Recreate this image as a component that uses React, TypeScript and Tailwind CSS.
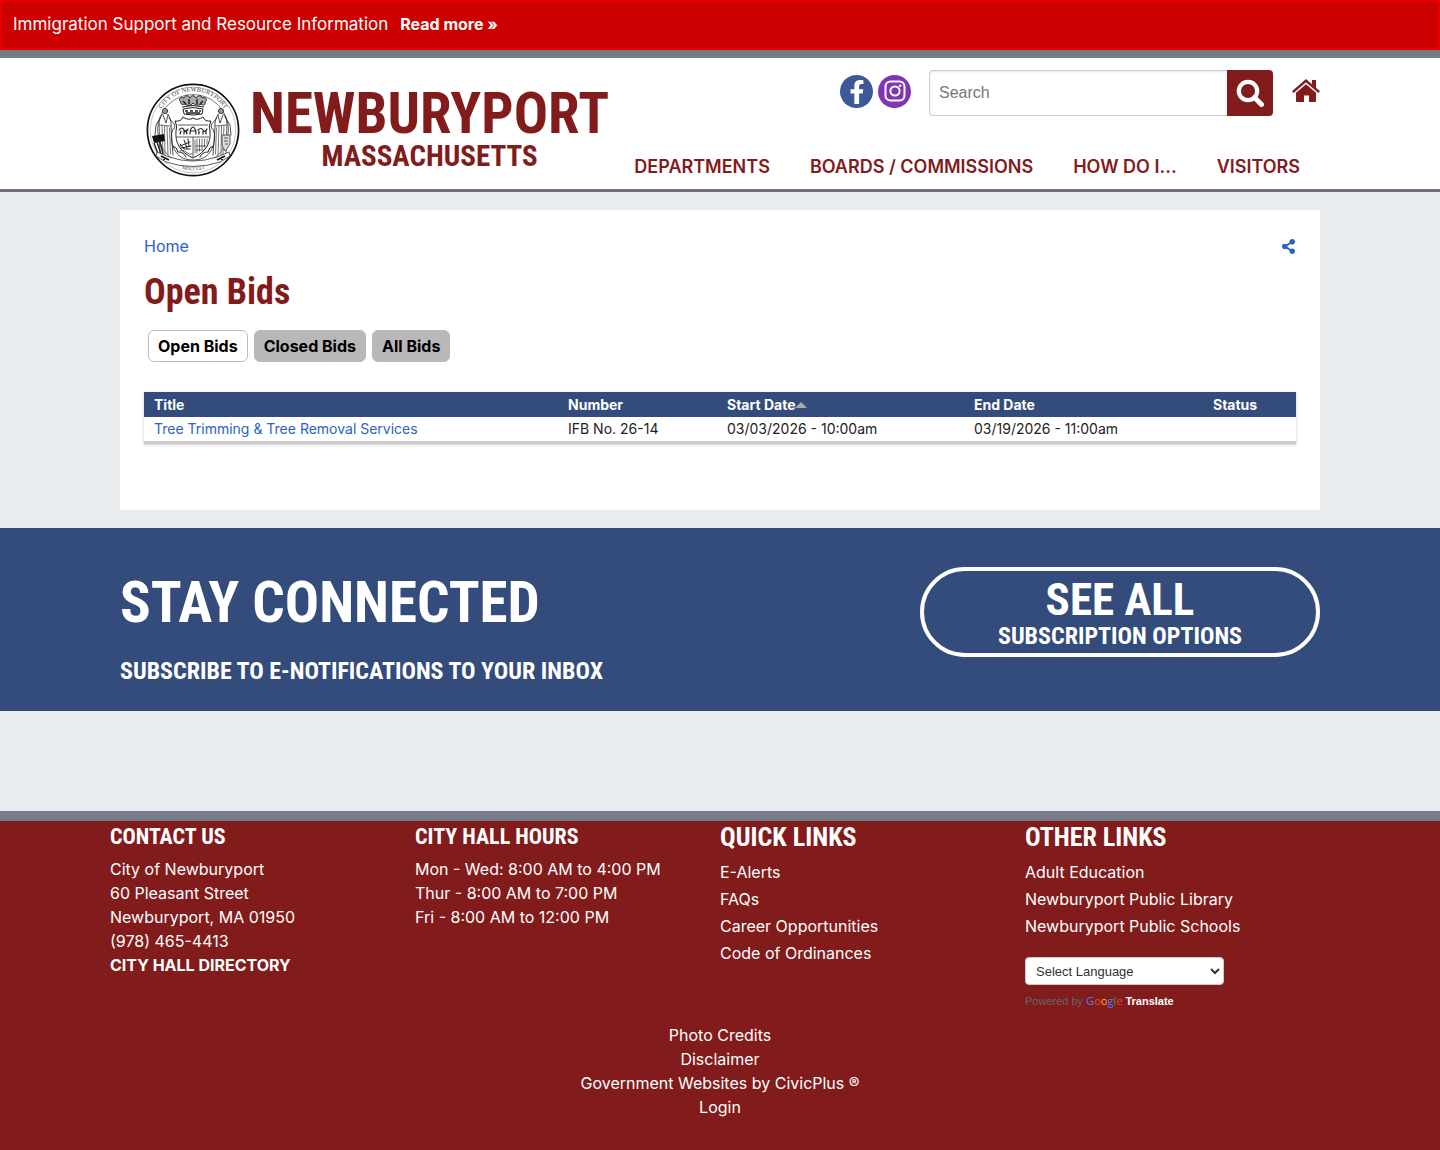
import React from "react";
import { FaFacebookF, FaShareAlt } from "react-icons/fa";

const heading = "font-['Roboto_Condensed','Liberation_Sans_Narrow','Open_Sans_Condensed','DejaVu_Sans_Condensed',sans-serif] font-bold";

function Figure() {
  return (
    <g fill="none" stroke="#222" strokeWidth="0.8" strokeLinecap="round">
      <circle cx="19" cy="28" r="2.6" fill="#999" />
      <path d="M16.5 31 C14 34 13 37 13 42 L14 72 M21.5 31 C24 34 25.5 38 25 44 L27 72 M17 32 L20 40 L22 32" />
      <path d="M16 42 L17 72 M18.5 43 L19 72 M21 43 L22 72 M23.5 45 L24.5 71 M13 42 L25 43" stroke="#555" />
      <path d="M15 34 L10 42 L9 52 M23 35 L29 42 L28 46" />
    </g>
  );
}

function Seal() {
  return (
    <svg viewBox="0 0 94 94" className="size-[94px] shrink-0" role="img" aria-label="City of Newburyport seal">
      <defs>
        <path id="seal-top" d="M14.8 62.5 A36.7 36.7 0 1 1 79.2 62.5" />
        <path id="seal-bottom" d="M24 80 A40 40 0 0 0 70 80" />
      </defs>
      <circle cx="47" cy="47" r="45.6" fill="#fff" stroke="#111" strokeWidth="1.7" />
      <circle cx="47" cy="47" r="42.8" fill="none" stroke="#888" strokeWidth="0.5" />
      <circle cx="47" cy="47" r="35.5" fill="none" stroke="#444" strokeWidth="0.7" />
      <text fontSize="6.5" fill="#444" fontFamily="Liberation Serif, serif">
        <textPath href="#seal-top" startOffset="50%" textAnchor="middle">CITY OF NEWBURYPORT</textPath>
      </text>
      <g fill="none" stroke="#222" strokeWidth="1">
        <path d="M35 19 C32 17 34 13 38 15 C39 12 43 12 44 15 C45 12 49 12 50 15 C52 12 56 12 56 15 C60 13 62 17 59 19 C60 22 57 23 55 21 C52 23 49 22 47 20 C45 23 41 23 39 21 C36 22 34 21 35 19Z" fill="#aaa" />
        <path d="M37 18 L40 21 M43 16 L43 21 M51 16 L51 21 M57 18 L54 21" strokeWidth="1.5" />
        <path d="M36 24 Q47 21 58 24 M37 26 Q47 23 57 26 L56 31 Q47 33 38 31Z" />
        <path d="M39 28 h3 M44 28 h3 M49 28 h3 M53 28 h2 M40 30 h14" strokeWidth="1.4" />
      </g>
      <path d="M29 38 Q35 39 37 34 Q43 38 47 35 Q51 38 57 34 Q59 39 65 38 Q62 43 64 48 C65 60 60 69 47 75 C34 69 29 60 30 48 Q32 43 29 38Z" fill="#fff" stroke="#222" strokeWidth="1" />
      <path d="M32 42 H62 M31 54 H63 M47 54 V74" fill="none" stroke="#333" strokeWidth="0.8" />
      <g fill="none" stroke="#222" strokeLinecap="round">
        <path d="M33 47 q3 -4 5 0 t4 -1 M34 51 l1 -3 M38 51 v-3 M41 51 l-1 -4 M44 51 q0 -6 3 -7 q3 1 3 7 M45 48 h4 M52 47 q3 -3 5 0 t4 -1 M53 51 v-3 M57 51 v-3 M60 51 v-4" strokeWidth="1.2" />
        <path d="M34 63 L44 59 M35 65 L45 63 M38 57 l3 8 M42 56 l1 7 M34 61 l4 5 h6" strokeWidth="1" />
        <path d="M49 57 v13 M51 56 v14 M53.5 56 v12 M56 56 v10 M58.5 56 v8 M61 56 v5" stroke="#666" strokeWidth="0.9" />
        <path d="M34 68 q3 -2 6 1 t6 2 M50 63 h10 M50 67 h8" strokeWidth="0.7" />
        <path d="M27 46 C24 53 25 62 30 69 C34 75 40 77 47 77 C54 77 60 75 64 69 C69 62 70 53 67 46" strokeWidth="0.8" />
        <path d="M27 63 q4 1 5 6 q6 0 8 5 M67 63 q-4 1 -5 6 q-6 0 -8 5" strokeWidth="1" />
      </g>
      <Figure />
      <g transform="translate(94 0) scale(-1 1)"><Figure /></g>
      <path d="M6 53 L18 51 L19 58 L8 60Z" fill="#111" />
      <path d="M8 60 L12 71 M11 59 L15 71 M14 59 L17 71" stroke="#222" strokeWidth="1.4" />
      <path d="M76 52 h8 v9 q-3 5 -5 7 q-3 -5 -3 -7Z M78 55 h4 M78 58 h4 M79 61 h3" fill="#ddd" stroke="#333" strokeWidth="0.8" />
      <path d="M11 69 L23 74 Q47 82 71 74 L83 69 L84 73 L74 79 Q47 88 20 79 L10 73Z" fill="#fff" stroke="#333" strokeWidth="0.8" />
      <path d="M15 73 L23 77 M71 77 L79 73 M18 74 v3 M76 74 v3" stroke="#111" strokeWidth="1.8" />
      <text fontSize="5" fill="#444" fontFamily="Liberation Serif, serif">
        <textPath href="#seal-bottom" startOffset="50%" textAnchor="middle">MDCCCLI</textPath>
      </text>
    </svg>
  );
}

function InstagramIcon() {
  return (
    <svg viewBox="0 0 22 22" className="size-[22px]" fill="none" stroke="currentColor" strokeWidth="2">
      <rect x="1.5" y="1.5" width="19" height="19" rx="5" />
      <circle cx="11" cy="11" r="4.6" />
      <circle cx="16.2" cy="5.8" r="1.3" fill="currentColor" stroke="none" />
    </svg>
  );
}

function SearchIcon() {
  return (
    <svg viewBox="0 0 28 28" className="size-7" fill="none" stroke="currentColor">
      <circle cx="12" cy="12" r="9.2" strokeWidth="4.2" />
      <path d="M18.5 18.5 L25.5 25.5" strokeWidth="5" strokeLinecap="round" />
    </svg>
  );
}

function HomeIcon() {
  return (
    <svg viewBox="0 0 28 24" className="h-6 w-7" fill="currentColor">
      <path d="M14 0 L20 5.2 V1 H24 V8.7 L28 12.2 L26.4 14 L14 3.3 L1.6 14 L0 12.2Z" />
      <path d="M14 5.2 L24 13.8 V22 Q24 23 23 23 H17 V16.5 H12 V23 H5 Q4 23 4 22 V13.8Z" />
    </svg>
  );
}

function Header() {
  return (
    <header className="border-t-8 border-b-3 border-t-[#747b85] border-b-[#6f6f80] bg-white">
      <div className="mx-auto flex max-w-[1200px] flex-wrap justify-between">
        <a href="#" className="ml-[26px] flex items-start gap-[10px] pt-[25px] pb-3 text-[#821b1b]">
          <Seal />
          <span className={`flex flex-col items-center ${heading}`}>
            <span className="pt-[5px] text-[57px] leading-[52px]">NEWBURYPORT</span>
            <span className="text-[29px] leading-8">MASSACHUSETTS</span>
          </span>
        </a>
        <div className="flex flex-col justify-between">
          <div className="flex items-center justify-end pt-3">
            <a href="#" aria-label="Facebook" className="mb-1 flex size-[33px] items-end justify-center rounded-full bg-[#3b5998] pb-1 text-white">
              <FaFacebookF size={24} />
            </a>
            <a href="#" aria-label="Instagram" className="mb-1 ml-[5px] flex size-[33px] items-center justify-center rounded-full bg-[#7f36b3] text-white">
              <InstagramIcon />
            </a>
            <form className="ml-[18px] flex" onSubmit={(e) => e.preventDefault()}>
              <input
                aria-label="Search"
                placeholder="Search"
                className="h-[46px] w-[298px] rounded-l border border-r-0 border-[#ccc] bg-white px-[9px] font-['Liberation_Sans',sans-serif] text-base placeholder:text-[#777] shadow-[inset_0_1px_2px_rgba(0,0,0,0.1)]"
              />
              <button aria-label="Submit search" className="flex h-[46px] w-[46px] items-center justify-center rounded-r bg-[#821b1b] text-white">
                <SearchIcon />
              </button>
            </form>
            <a href="#" aria-label="Home" className="mb-1 ml-[19px] text-[#821b1b]"><HomeIcon /></a>
          </div>
          <nav className="flex justify-end gap-10 pr-5 pb-2 text-lg font-semibold text-[#821b1b]">
            <a href="#">DEPARTMENTS</a>
            <a href="#">BOARDS / COMMISSIONS</a>
            <a href="#">HOW DO I...</a>
            <a href="#">VISITORS</a>
          </nav>
        </div>
      </div>
    </header>
  );
}

function Bids() {
  return (
    <main className="mx-auto my-[18px] min-h-[300px] w-full max-w-[1200px] bg-white px-6 pt-6">
      <div className="flex items-center justify-between text-[#2b62c4]">
        <a href="#">Home</a>
        <button aria-label="Share"><FaShareAlt size={15} /></button>
      </div>
      <h1 className={`mt-3 text-[36px] leading-[44px] text-[#821b1b] ${heading}`}>Open Bids</h1>
      <div className="mt-4 ml-1 flex gap-[6px] text-base font-bold text-black">
        <a href="#" className="flex h-8 items-center rounded-md border border-[#bbb] bg-white px-[9px]">Open Bids</a>
        <a href="#" className="flex h-8 items-center rounded-md border border-[#b8b8b8] bg-[#b8b8b8] px-[9px]">Closed Bids</a>
        <a href="#" className="flex h-8 items-center rounded-md border border-[#b8b8b8] bg-[#b8b8b8] px-[9px]">All Bids</a>
      </div>
      <table className="mt-[30px] w-full table-fixed border-b-3 border-[#ccc] text-left text-sm leading-6 text-[#222] shadow-[0_1px_3px_rgba(0,0,0,0.2)]">
        <colgroup>
          <col className="w-[414px]" /><col className="w-[159px]" /><col className="w-[247px]" /><col className="w-[239px]" /><col className="w-[93px]" />
        </colgroup>
        <thead className="bg-[#334c7b] leading-[25px] text-white">
          <tr>
            <th className="px-[10px]">Title</th>
            <th className="px-[10px]">Number</th>
            <th className="px-[10px]"><a href="#" className="flex items-center">Start Date<span className="border-x-6 border-b-6 border-x-transparent border-b-[#a9a9a9]" /></a></th>
            <th className="px-[10px]">End Date</th>
            <th className="px-[10px]">Status</th>
          </tr>
        </thead>
        <tbody>
          <tr>
            <td className="px-[10px] text-[#2b62c4]"><a href="#">Tree Trimming &amp; Tree Removal Services</a></td>
            <td className="px-[10px]">IFB No. 26-14</td>
            <td className="px-[10px]">03/03/2026 - 10:00am</td>
            <td className="px-[10px]">03/19/2026 - 11:00am</td>
            <td />
          </tr>
        </tbody>
      </table>
    </main>
  );
}

function StayConnected() {
  return (
    <section className="bg-[#334c7b] text-white">
      <div className={`mx-auto flex max-w-[1200px] flex-wrap items-start justify-between pt-[39px] pb-6 ${heading}`}>
        <div>
          <h2 className="text-[57px] leading-[72px]">STAY CONNECTED</h2>
          <p className="mt-4 text-2xl leading-8">SUBSCRIBE TO E-NOTIFICATIONS TO YOUR INBOX</p>
        </div>
        <a href="#" className="flex h-[90px] w-[400px] flex-col items-center justify-center rounded-full border-4 border-white">
          <span className="text-[45px] leading-[48px]">SEE ALL</span>
          <span className="text-2xl leading-6">SUBSCRIPTION OPTIONS</span>
        </a>
      </div>
    </section>
  );
}

function Footer() {
  return (
    <footer className="mt-[100px] grow border-t-10 border-[#777d89] bg-[#821b1b] text-white">
      <div className="mx-auto grid max-w-[1220px] grid-cols-4 leading-6">
        <div>
          <h3 className={`mb-1 text-[22px] leading-8 ${heading}`}>CONTACT US</h3>
          <p>City of Newburyport<br />60 Pleasant Street<br />Newburyport, MA 01950<br />(978) 465-4413</p>
          <a href="#" className="font-bold">CITY HALL DIRECTORY</a>
        </div>
        <div>
          <h3 className={`mb-1 text-[22px] leading-8 ${heading}`}>CITY HALL HOURS</h3>
          <p>Mon - Wed: 8:00 AM to 4:00 PM<br />Thur - 8:00 AM to 7:00 PM<br />Fri - 8:00 AM to 12:00 PM</p>
        </div>
        <div>
          <h3 className={`mb-[6px] text-[26px] leading-8 ${heading}`}>QUICK LINKS</h3>
          <ul className="leading-[27px]">
            <li><a href="#">E-Alerts</a></li>
            <li><a href="#">FAQs</a></li>
            <li><a href="#">Career Opportunities</a></li>
            <li><a href="#">Code of Ordinances</a></li>
          </ul>
        </div>
        <div>
          <h3 className={`mb-[6px] text-[26px] leading-8 ${heading}`}>OTHER LINKS</h3>
          <ul className="leading-[27px]">
            <li><a href="#">Adult Education</a></li>
            <li><a href="#">Newburyport Public Library</a></li>
            <li><a href="#">Newburyport Public Schools</a></li>
          </ul>
          <div className="mt-[17px] font-['Liberation_Sans',sans-serif]">
            <select aria-label="Select Language" className="block h-7 w-[199px] rounded border border-[#ccc] bg-white px-[6px] text-[13px] text-[#333]">
              <option>Select Language</option>
            </select>
            <p className="mt-1 text-[11px] text-[#666]">
              Powered by{" "}
              <a href="#" className="font-bold text-white">
                <span className="font-['Open_Sans',sans-serif] font-medium" aria-label="Google">
                  <span className="text-[#4285f4]">G</span><span className="text-[#ea4335]">o</span><span className="text-[#fbbc05]">o</span><span className="text-[#4285f4]">g</span><span className="text-[#34a853]">l</span><span className="text-[#ea4335]">e</span>
                </span>{" "}
                Translate
              </a>
            </p>
          </div>
        </div>
      </div>
      <div className="flex flex-col items-center pt-[10px] pb-7 leading-6">
        <a href="#">Photo Credits</a>
        <a href="#">Disclaimer</a>
        <a href="#">Government Websites by CivicPlus ®</a>
        <a href="#">Login</a>
      </div>
    </footer>
  );
}

export default function App() {
  return (
    <div className="flex min-h-screen flex-col bg-[#e8ecee] font-[Inter,sans-serif] text-base">
      <div className="flex items-center gap-3 border-2 border-[#e60000] bg-[#cc0000] px-[11px] pt-[10px] pb-3 leading-6 text-white">
        <span className="text-[17px]">Immigration Support and Resource Information</span>
        <a href="#" className="font-bold">Read more »</a>
      </div>
      <Header />
      <Bids />
      <StayConnected />
      <Footer />
    </div>
  );
}
